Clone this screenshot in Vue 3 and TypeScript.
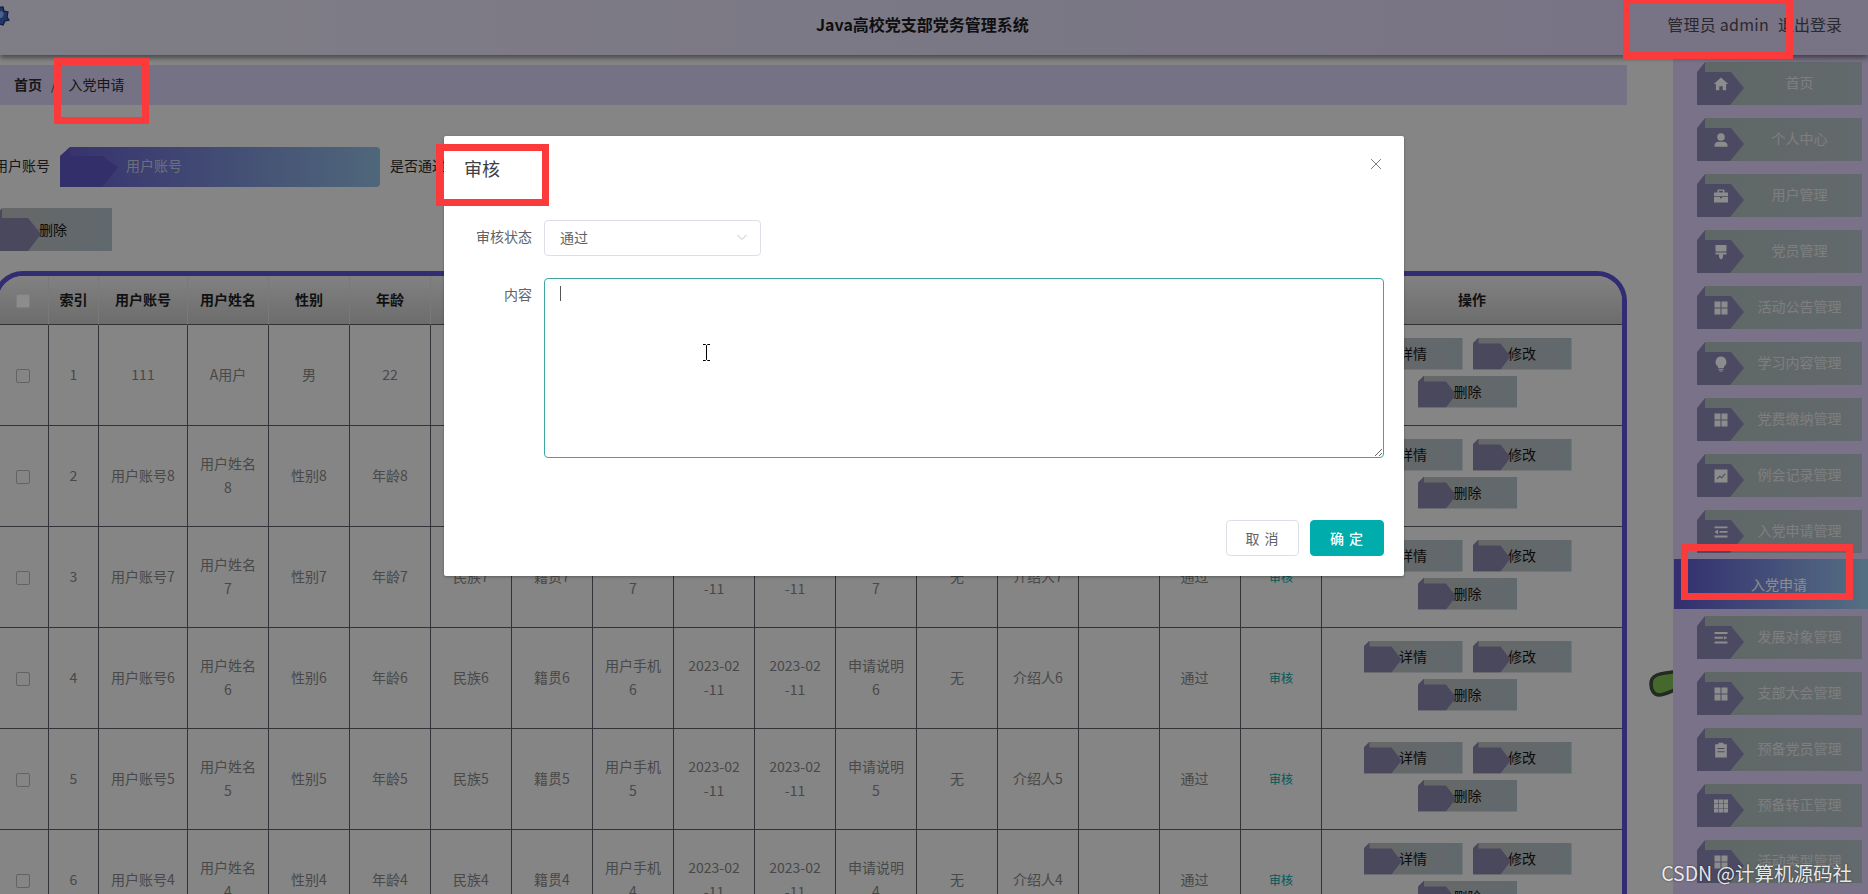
<script setup lang="ts">
interface Row {
  account: string; name: string; sex: string; age: string; nation: string; origin: string;
  phone: string; applied: string; reviewed: string; note: string; file: string; intro: string;
  reply: string; pass: string;
}
const columns = ['用户姓名', '性别', '年龄', '民族', '籍贯', '用户手机', '申请时间', '入党时间', '申请说明', '附件', '介绍人', '审核回复', '是否通过', '审核'];
const date = '2023-02\n-11';
function makeRow(n: number): Row {
  return {
    account: `用户账号${n}`, name: `用户姓名\n${n}`, sex: `性别${n}`, age: `年龄${n}`,
    nation: `民族${n}`, origin: `籍贯${n}`, phone: `用户手机\n${n}`, applied: date, reviewed: date,
    note: `申请说明\n${n}`, file: '无', intro: `介绍人${n}`, reply: '', pass: '通过',
  };
}
const first: Row = { ...makeRow(1), account: '111', name: 'A用户', sex: '男', age: '22', nation: '汉族', origin: '籍贯', phone: '138000\n00000', note: '申请说明', intro: '介绍人' };
const rows: Row[] = [first, makeRow(8), makeRow(7), makeRow(6), makeRow(5), makeRow(4)];

const G4 = 'M1.5 1.5h6v6h-6zM8.5 1.5h6v6h-6zM1.5 8.5h6v6h-6zM8.5 8.5h6v6h-6z';
const G9 = 'M1 1.5h4.3v4H1zM5.9 1.5h4.2v4H5.9zM10.7 1.5H15v4h-4.3zM1 6.1h4.3v3.8H1zM5.9 6.1h4.2v3.8H5.9zM10.7 6.1H15v3.8h-4.3zM1 10.5h4.3v4H1zM5.9 10.5h4.2v4H5.9zM10.7 10.5H15v4h-4.3z';
interface Item { label: string; icon: string; active?: boolean }
const menu: Item[] = [
  { label: '首页', icon: 'M8 1.5L15.2 8h-2.1v6.3H9.7v-4.1H6.3v4.1H2.9V8H.8z' },
  { label: '个人中心', icon: 'M8 1.2a3.8 3.8 0 1 1 0 7.6a3.8 3.8 0 1 1 0-7.6zM1.5 14.8v-1.4c0-2.2 2-3.6 4-3.6h5c2 0 4 1.4 4 3.6v1.4z' },
  { label: '用户管理', icon: 'M5.5 1.5h5a1 1 0 0 1 1 1v2h3a.5.5 0 0 1 .5.5v3.2H1V5a.5.5 0 0 1 .5-.5h3v-2a1 1 0 0 1 1-1zM6 2.8v1.7h4V2.8zM1 9h6v1.2h2V9h6v5.5H1z' },
  { label: '党员管理', icon: 'M2.5 1h11v6.6h-11zM2.5 8.4h11v2H10v2.8L8.6 15.3H7.4L6 13.2v-2.8H2.5z' },
  { label: '活动公告管理', icon: G4 },
  { label: '学习内容管理', icon: 'M8 .6a5.4 5.4 0 0 1 3 9.9v1.5H5v-1.5A5.4 5.4 0 0 1 8 .6zM5.3 12.8h5.4v1H5.3zM6.3 14.5h3.4v.9H6.3z' },
  { label: '党费缴纳管理', icon: G4 },
  { label: '例会记录管理', icon: 'M1.5 1.5h13v13h-13zM3.6 10.6l.7.7 2.5-2.4 2 1.5 3.8-4.5-.7-.6-3.2 3.8-2-1.5z' },
  { label: '入党申请管理', icon: 'M1.5 2.5h13v1.8h-13zM6.5 7h8v1.8h-8zM1.5 11.6h13v1.8h-13zM1.5 7.9l3.5-2.3v4.6z' },
  { label: '入党申请', icon: '', active: true },
  { label: '发展对象管理', icon: 'M1.5 2h13v2h-13zM1.5 6.8h8.5v2H1.5zM11 6l3.5 1.8L11 9.6zM1.5 11.6h13v2h-13z' },
  { label: '支部大会管理', icon: G4 },
  { label: '预备党员管理', icon: 'M5.5.8h5v1.4h3.3v13.2H2.2V2.2h3.3zM4.4 6v1.1h7.2V6zM4.4 9.2v1.1h7.2V9.2z' },
  { label: '预备转正管理', icon: G9 },
  { label: '活动类型管理', icon: G4 },
];
</script>

<template>
  <div class="app">
    <header class="topbar">
      <svg class="logo" viewBox="0 0 10 20" aria-hidden="true">
        <path d="M-4 2L3 1l1 4 4 1-1 5 2 3-4 1-2 4-4-1z" class="logo-out" />
        <path d="M-2 6l4-1 2 3-2 4-4 0z" class="logo-in" />
      </svg>
      <h1 class="title">Java高校党支部党务管理系统</h1>
      <div class="user">
        <span class="who">管理员 admin</span>
        <span>退出登录</span>
      </div>
    </header>

    <div class="body">
      <main class="main">
        <nav class="crumbs">
          <b>首页</b>
          <i>/</i>
          <span>入党申请</span>
        </nav>

        <div class="search">
          <label>用户账号</label>
          <div class="search-input">用户账号</div>
          <label>是否通过</label>
        </div>

        <div class="tools">
          <button class="fold big">删除</button>
        </div>

        <section class="table-wrap">
          <table>
            <colgroup>
              <col class="c-check" />
              <col class="c-index" />
              <col class="c-account" />
              <col v-for="c in columns" :key="c" class="c-std" />
              <col class="c-ops" />
            </colgroup>
            <thead>
              <tr>
                <th><span class="check on"></span></th>
                <th>索引</th>
                <th>用户账号</th>
                <th v-for="c in columns" :key="c">{{ c }}</th>
                <th>操作</th>
              </tr>
            </thead>
            <tbody>
              <tr v-for="(r, i) in rows" :key="i">
                <td><span class="check"></span></td>
                <td>{{ i + 1 }}</td>
                <td>{{ r.account }}</td>
                <td>{{ r.name }}</td>
                <td>{{ r.sex }}</td>
                <td>{{ r.age }}</td>
                <td>{{ r.nation }}</td>
                <td>{{ r.origin }}</td>
                <td>{{ r.phone }}</td>
                <td>{{ r.applied }}</td>
                <td>{{ r.reviewed }}</td>
                <td>{{ r.note }}</td>
                <td>{{ r.file }}</td>
                <td>{{ r.intro }}</td>
                <td>{{ r.reply }}</td>
                <td class="pass">{{ r.pass }}</td>
                <td><a class="audit">审核</a></td>
                <td>
                  <div class="ops">
                    <button class="fold">详情</button>
                    <button class="fold">修改</button>
                    <button class="fold">删除</button>
                  </div>
                </td>
              </tr>
            </tbody>
          </table>
        </section>
      </main>

      <svg class="blob" viewBox="0 0 34 30" aria-hidden="true">
        <path d="M33 2C22 3 13 4 8 6 3 8 2 11 2 15c0 6 3 11 8 11 6 0 14-5 23-8z" />
      </svg>

      <aside class="side">
        <a v-for="m in menu" :key="m.label" class="item" :class="{ active: m.active }">
          <svg v-if="m.icon" class="item-icon" viewBox="0 0 16 16" aria-hidden="true">
            <path :d="m.icon" fill-rule="evenodd" />
          </svg>
          <span>{{ m.label }}</span>
        </a>
      </aside>
    </div>

    <div class="overlay">
      <div class="dialog">
        <div class="dialog-head">
          <span>审核</span>
          <svg class="close" viewBox="0 0 12 12" aria-hidden="true">
            <path d="M1 1l10 10M11 1L1 11" />
          </svg>
        </div>
        <div class="form">
          <div class="form-row">
            <label>审核状态</label>
            <div class="select">
              <span>通过</span>
              <svg viewBox="0 0 12 12" aria-hidden="true"><path d="M1.5 4l4.5 4.5L10.5 4" /></svg>
            </div>
          </div>
          <div class="form-row">
            <label class="top">内容</label>
            <div class="area">
              <textarea readonly></textarea>
              <span class="caret"></span>
              <svg class="beam" viewBox="0 0 9 17" aria-hidden="true">
                <path d="M1 .5h2.5l1 1 1-1H8M4.5 1.5v14M1 16.5h2.5l1-1 1 1H8" />
              </svg>
            </div>
          </div>
        </div>
        <div class="dialog-foot">
          <button class="btn">取 消</button>
          <button class="btn primary">确 定</button>
        </div>
      </div>
    </div>

    <div class="mark m-crumb"></div>
    <div class="mark m-title"></div>
    <div class="mark m-user"></div>
    <div class="mark m-side"></div>
    <div class="watermark">CSDN @计算机源码社</div>
  </div>
</template>

<style>
html, body { margin: 0; padding: 0; overflow: hidden; background: #f2f2f2; }
</style>

<style scoped>
.app {
  position: relative;
  width: 1868px;
  height: 894px;
  overflow: hidden;
  background: #f2f2f2;
  font-family: "Noto Sans CJK SC", "Liberation Sans", sans-serif;
  font-size: 14px;
  color: #333;
}
button { font-family: inherit; border: 0; padding: 0; cursor: pointer; }

/* top bar */
.topbar {
  position: relative;
  z-index: 3;
  height: 55px;
  display: grid;
  grid-template-columns: 816px auto 1fr;
  background: linear-gradient(90deg, #e7e5f4, #dad1f2);
  box-shadow: 0 3px 5px rgba(0, 0, 0, .45);
}
.logo { width: 10px; height: 20px; margin-top: 6px; }
.logo-out { fill: #3a63c4; stroke: #1f2f66; stroke-width: 1.2; }
.logo-in { fill: #8fb0ee; }
.title { margin: 0; font-size: 16px; font-weight: 700; color: #1c1c1c; line-height: 48px; white-space: nowrap; }
.user {
  justify-self: end;
  display: flex;
  gap: 9px;
  padding-right: 26px;
  font-size: 16px;
  color: #4c4c55;
  line-height: 48px;
}
.who { letter-spacing: .25px; }

/* main column */
.body { display: flex; height: 839px; }
.main { width: 1634px; margin-left: -7px; flex: none; padding-top: 10px; }
.crumbs {
  height: 40px;
  box-sizing: border-box;
  padding: 0 0 3px 21px;
  display: flex;
  align-items: center;
  background: #d6cff2;
  color: #2a2a2a;
}
.crumbs b { font-weight: 700; }
.crumbs i { font-style: normal; margin: 0 12px 0 9px; color: #555; }

.search { display: flex; height: 40px; margin-top: 42px; gap: 10px; padding-left: 1px; line-height: 37px; }
.search label { color: #2a2a2a; white-space: nowrap; }
.search-input {
  position: relative;
  width: 320px;
  height: 40px;
  box-sizing: border-box;
  padding-left: 66px;
  color: #c5c9e6;
  border-radius: 0 4px 4px 4px;
  clip-path: polygon(10px 0, 100% 0, 100% 100%, 0 100%, 0 9px);
  background: linear-gradient(90deg, #635bc8, #90bcdf);
}
.search-input::before {
  content: "";
  position: absolute;
  inset: 0;
  background: #5c56c4;
  clip-path: polygon(0 9px, 10px 0, 10px 9px, 42px 9px, 58px 20px, 42px 40px, 0 40px);
}
.tools { margin-top: 21px; margin-left: 1px; }

/* folded shape button */
.fold {
  position: relative;
  width: 99px;
  height: 32px;
  padding-bottom: 2px;
  color: #141414;
  font-size: 14px;
  background: linear-gradient(90deg, #bcbcbc, #b0bfc6);
  clip-path: polygon(6px 0, 100% 0, 100% 100%, 0 100%, 0 6px);
}
.fold::before {
  content: "";
  position: absolute;
  inset: 0;
  background: #8783a8;
  clip-path: polygon(0 6px, 6px 0, 6px 6px, 28px 6px, 38px 19px, 28px 32px, 0 32px);
}
.fold.big {
  width: 118px;
  height: 43px;
  display: block;
  clip-path: polygon(8px 0, 100% 0, 100% 100%, 0 100%, 0 10px);
}
.fold.big::before {
  clip-path: polygon(0 10px, 8px 0, 8px 10px, 34px 10px, 47px 26px, 34px 43px, 0 43px);
}

/* table */
.table-wrap {
  margin-top: 20px;
  border: 5px solid #5b52cf;
  border-radius: 30px 30px 0 0;
  overflow: hidden;
}
table { width: 1624px; table-layout: fixed; border-collapse: separate; border-spacing: 0; }
.c-check { width: 51px; }
.c-index { width: 50px; }
.c-account { width: 89px; }
.c-std { width: 81px; }
.c-ops { width: 300px; }
th {
  height: 49px;
  padding: 0 0 2px;
  box-sizing: border-box;
  font-size: 14px;
  font-weight: 700;
  color: #1e1e1e;
  background: linear-gradient(180deg, #ececec, #c6c6c6);
  border-right: 1px solid #dcdcdc;
  border-bottom: 1px solid #5c5c5c;
  overflow: hidden;
  white-space: nowrap;
}
th:last-child, td:last-child { border-right: 0; }
td {
  height: 101px;
  box-sizing: border-box;
  padding: 0 6px 2px;
  text-align: center;
  color: #858585;
  line-height: 24px;
  white-space: pre-line;
  background: #f2f2f2;
  border-right: 1px solid #5c5c68;
  border-bottom: 1px solid #5c5c68;
}
td.pass { padding-right: 17px; }
.check {
  display: inline-block;
  width: 14px;
  height: 14px;
  box-sizing: border-box;
  vertical-align: middle;
  border: 1px solid #b4b4b4;
  border-radius: 2px;
}
.check.on { background: #fff; border-color: #e8e8e8; }
.audit { color: #00a4a4; font-size: 12px; }
.ops {
  display: flex;
  flex-wrap: wrap;
  justify-content: center;
  gap: 6px 10px;
  padding: 0 9px 3px 0;
}

/* green blob */
.blob {
  position: absolute;
  left: 1649px;
  top: 669px;
  width: 34px;
  height: 30px;
  z-index: 1;
}
.blob path { fill: #7ec050; stroke: #3e4d3e; stroke-width: 3.5; }

/* sidebar */
.side {
  position: relative;
  z-index: 2;
  flex: none;
  width: 195px;
  margin-left: 46px;
  padding: 7px 0 0;
  box-sizing: border-box;
  display: flex;
  flex-direction: column;
  gap: 13px;
  background: #decff7;
}
.item {
  position: relative;
  display: flex;
  align-items: center;
  justify-content: center;
  width: 165px;
  height: 43px;
  margin-left: 24px;
  padding: 0 0 3px 40px;
  box-sizing: border-box;
  color: #e6e6e6;
  background: linear-gradient(90deg, #aebcb9, #b4c0c6);
  clip-path: polygon(8px 0, 100% 0, 100% 100%, 0 100%, 0 10px);
}
.item::before {
  content: "";
  position: absolute;
  inset: 0;
  background: #8a86b4;
  clip-path: polygon(0 10px, 8px 0, 8px 10px, 34px 10px, 47px 26px, 33px 43px, 0 43px);
}
.item-icon { position: absolute; left: 16px; top: 14px; width: 16px; height: 16px; z-index: 1; fill: #fff; }
.item span { position: relative; }
.item.active {
  width: 194px;
  height: 50px;
  margin: -7px 0 -6px 1px;
  padding: 0 0 0 16px;
  clip-path: none;
  color: #fff;
  background: linear-gradient(90deg, #5d55cc, #9ccbee);
}
.item.active::before { display: none; }

/* dialog */
.overlay {
  position: absolute;
  inset: 0;
  z-index: 10;
  background: rgba(0, 0, 0, .45);
}
.dialog {
  display: flex;
  flex-direction: column;
  width: 960px;
  height: 440px;
  margin: 136px 0 0 444px;
  background: #fff;
  border-radius: 2px;
  box-shadow: 0 1px 3px rgba(0, 0, 0, .3);
}
.dialog-head {
  position: relative;
  padding: 20px 20px 0;
  height: 64px;
  box-sizing: border-box;
  font-size: 18px;
  line-height: 24px;
  color: #3f4144;
}
.close {
  position: absolute;
  right: 22px;
  top: 22px;
  width: 12px;
  height: 12px;
  fill: none;
  stroke: #7d7f85;
  stroke-width: 1;
}
.form { padding: 20px 20px 0; display: flex; flex-direction: column; gap: 22px; }
.form-row { display: flex; gap: 12px; }
.form-row label {
  width: 68px;
  flex: none;
  text-align: right;
  line-height: 33px;
  color: #606266;
  white-space: nowrap;
}
.select {
  width: 217px;
  height: 36px;
  box-sizing: border-box;
  display: flex;
  align-items: center;
  justify-content: space-between;
  padding: 0 12px 2px 15px;
  border: 1px solid #dcdfe6;
  border-radius: 4px;
  color: #606266;
}
.select svg { width: 12px; height: 12px; fill: none; stroke: #c0c4cc; stroke-width: 1; }
.area { position: relative; flex: 1; height: 180px; }
.area textarea {
  display: block;
  width: 100%;
  height: 180px;
  box-sizing: border-box;
  border: 1px solid #3fa6a6;
  border-radius: 4px;
  outline: 0;
  padding: 8px 15px;
  resize: vertical;
  background: #fff;
}
.caret { position: absolute; left: 16px; top: 8px; width: 1px; height: 15px; background: #555; }
.beam {
  position: absolute;
  left: 158px;
  top: 66px;
  width: 9px;
  height: 17px;
  fill: none;
  stroke: #000;
  stroke-width: 1;
}
.dialog-foot {
  margin-top: auto;
  padding: 0 20px 20px;
  display: flex;
  justify-content: flex-end;
  gap: 11px;
}
.btn {
  width: 73px;
  height: 36px;
  box-sizing: border-box;
  padding-bottom: 1px;
  font-size: 14px;
  letter-spacing: 1px;
  color: #606266;
  background: #fff;
  border: 1px solid #dcdfe6;
  border-radius: 4px;
}
.btn.primary { width: 74px; background: #00acac; border-color: #00acac; color: #fff; font-weight: 500; }

/* annotation boxes */
.mark { position: absolute; z-index: 20; box-sizing: border-box; border: 7px solid #fb3b3b; }
.m-crumb { left: 54px; top: 58px; width: 95px; height: 66px; }
.m-title { left: 436px; top: 144px; width: 113px; height: 62px; }
.m-user { left: 1623px; top: -3px; width: 170px; height: 62px; }
.m-side { left: 1681px; top: 544px; width: 172px; height: 56px; }

.watermark {
  position: absolute;
  z-index: 21;
  right: 16px;
  top: 860px;
  font-size: 19.5px;
  line-height: 26px;
  color: rgba(255, 255, 255, .88);
  text-shadow: 0 0 2px rgba(0, 0, 0, .5);
  white-space: nowrap;
}
</style>
